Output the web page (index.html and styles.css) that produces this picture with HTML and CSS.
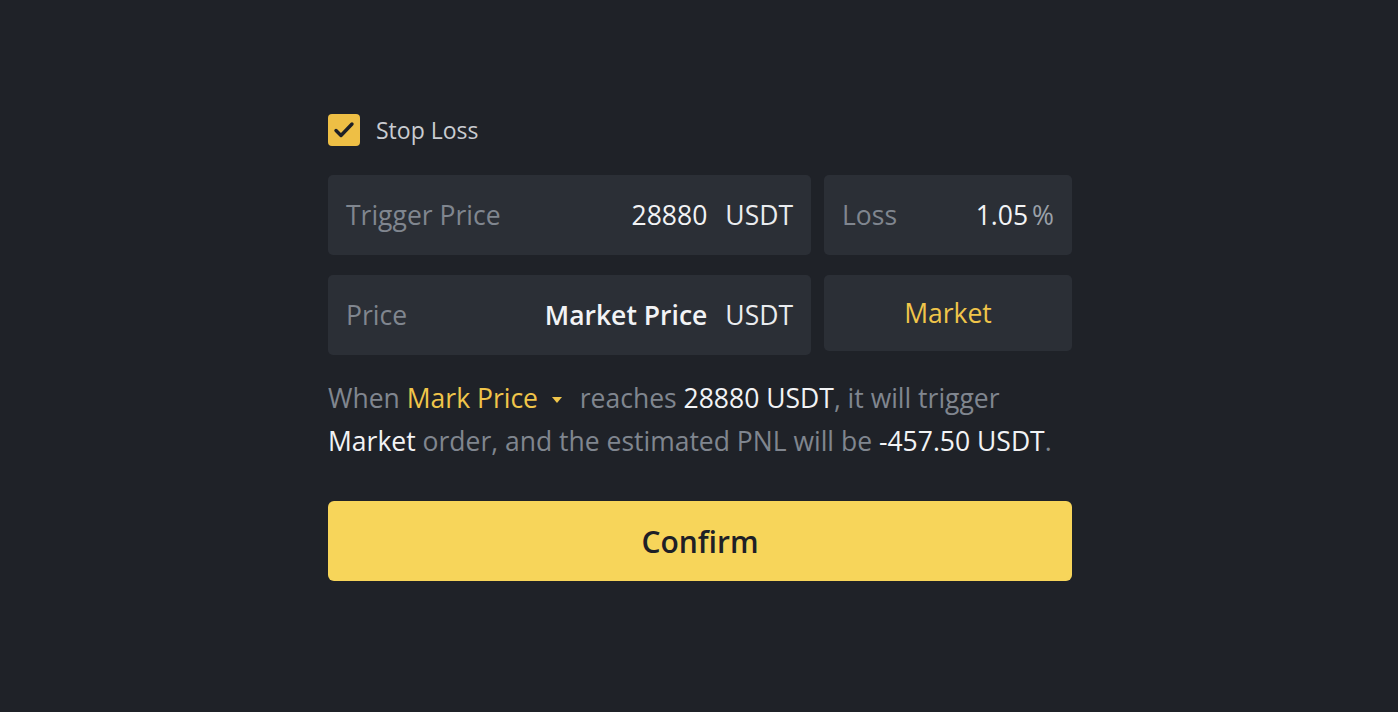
FILE: index.html
```html
<!DOCTYPE html>
<html lang="en">
<head>
    <meta charset="UTF-8">
    <title>Stop Loss</title>
    <link rel="stylesheet" href="styles.css">
</head>
<body>
    <div id="panel">
        <label class="check-row">
            <span class="checkbox">
                <svg width="24" height="24" viewBox="0 0 24 24"><path d="M4 12.5l5 5L20 6" fill="none" stroke="#1e2026" stroke-width="3.4" stroke-linecap="round" stroke-linejoin="round"/></svg>
            </span>
            <span class="check-label">Stop Loss</span>
        </label>

        <div class="row">
            <div class="field field-wide">
                <span class="field-label">Trigger Price</span>
                <span class="field-value">28880</span>
                <span class="field-unit">USDT</span>
            </div>
            <div class="field field-small">
                <span class="field-label">Loss</span>
                <span class="field-value">1.05</span>
                <span class="field-unit unit-pct">%</span>
            </div>
        </div>

        <div class="row">
            <div class="field field-wide">
                <span class="field-label">Price</span>
                <span class="field-value bold">Market Price</span>
                <span class="field-unit">USDT</span>
            </div>
            <div class="field field-small field-btn">Market</div>
        </div>

        <p class="summary">
            When <span class="hl">Mark Price <svg class="caret" width="12" height="8" viewBox="0 0 12 8"><path d="M1 1h10L6 7z" fill="#f0c54a"/></svg></span> reaches <span class="white">28880 USDT</span>, it will trigger<br>
            <span class="white">Market</span> order, and the estimated PNL will be <span class="white">-457.50 USDT</span>.
        </p>

        <button id="confirm">Confirm</button>
    </div>
</body>
</html>
```

FILE: styles.css
```css
body{
    margin: 0;
    background-color: #1f2228;
    font-family: "Open Sans", "Noto Sans", sans-serif;
    color: #eaecef;
    width: 1398px;
    height: 712px;
}
#panel{
    width: 744px;
    margin-left: 328px;
    padding-top: 114px;
}
.check-row{
    display: flex;
    align-items: center;
    gap: 16px;
    height: 32px;
}
.checkbox{
    width: 32px;
    height: 32px;
    border-radius: 4px;
    background-color: #eebf45;
    display: flex;
    align-items: center;
    justify-content: center;
}
.check-label{
    font-size: 23px;
    color: #c9ccd1;
}
.row{
    display: flex;
    gap: 13px;
    margin-top: 29px;
}
.row + .row{
    margin-top: 20px;
}
.field{
    height: 80px;
    background-color: #2b2f36;
    border-radius: 5px;
    display: flex;
    align-items: center;
    padding: 0 18px;
    box-sizing: border-box;
    font-size: 26.5px;
}
.field-wide{
    width: 483px;
}
.field-small{
    width: 248px;
}
.field-label{
    color: #80868f;
    flex: 1;
}
.field-value{
    color: #f2f3f5;
    font-weight: 500;
}
.bold{
    font-weight: 600;
}
.field-unit{
    color: #eaecef;
    margin-left: 18px;
}
.unit-pct{
    margin-left: 4px;
    color: #9aa0a8;
}
.field-btn{
    height: 76px;
    justify-content: center;
    color: #f0c54a;
    font-weight: 500;
}
.summary{
    margin: 22px 0 0 0;
    font-size: 26.5px;
    line-height: 43px;
    color: #80868f;
}
.hl{
    color: #f0c54a;
}
.caret{
    margin: 0 10px 4px 6px;
}
.white{
    color: #f2f3f5;
    font-weight: 500;
}
#confirm{
    display: block;
    width: 100%;
    height: 80px;
    margin-top: 38px;
    border: none;
    border-radius: 6px;
    background-color: #f7d55a;
    color: #1e2026;
    font-family: "Open Sans", "Noto Sans", sans-serif;
    font-size: 30px;
    font-weight: 600;
}
```
